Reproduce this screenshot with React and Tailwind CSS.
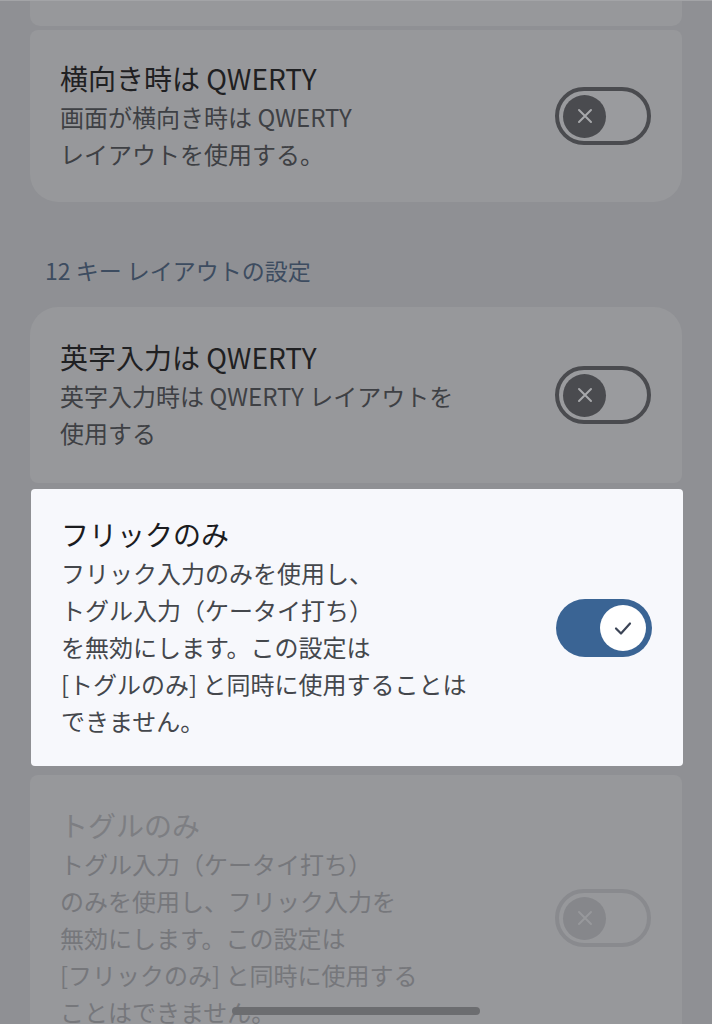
import React from "react";

const font = { fontFamily: '"Noto Sans CJK JP", "Noto Sans", sans-serif' };

function ToggleOff({ faded }) {
  return (
    <div
      className={`w-[96px] h-[58px] rounded-full border-[4px] flex items-center pl-[4px] shrink-0 ${
        faded ? "border-[#898a8e] bg-[#97989b]" : "border-[#4a4b4f] bg-[#9a9b9e]"
      }`}
    >
      <div
        className={`w-[43px] h-[43px] rounded-full flex items-center justify-center ${
          faded ? "bg-[#86878b]" : "bg-[#4a4b4f]"
        }`}
      >
        <svg width="20" height="20" viewBox="0 0 20 20">
          <path
            d="M4 4 L16 16 M16 4 L4 16"
            stroke={faded ? "#97989b" : "#a7a8ab"}
            strokeWidth="2"
            strokeLinecap="round"
          />
        </svg>
      </div>
    </div>
  );
}

function ToggleOn() {
  return (
    <div className="w-[96px] h-[58px] rounded-full bg-[#3a6494] flex items-center justify-end pr-[6px] shrink-0">
      <div className="w-[46px] h-[46px] rounded-full bg-white flex items-center justify-center">
        <svg width="22" height="22" viewBox="0 0 22 22">
          <path
            d="M4 11.5 L9 16.5 L18 6.5"
            stroke="#3b4456"
            strokeWidth="2.2"
            fill="none"
            strokeLinecap="round"
            strokeLinejoin="round"
          />
        </svg>
      </div>
    </div>
  );
}

function Row({ title, lines, toggle, titleColor, subColor, className }) {
  return (
    <div className={`flex items-center justify-between pl-[30px] pr-[31px] ${className}`}>
      <div className="flex flex-col whitespace-nowrap">
        <div className={`text-[28px] leading-[36px] ${titleColor}`}>{title}</div>
        <div className={`text-[24px] leading-[37px] mt-[2px] ${subColor}`}>
          {lines.map((l, i) => (
            <div key={i}>{l}</div>
          ))}
        </div>
      </div>
      {toggle}
    </div>
  );
}

export default function App() {
  return (
    <div
      className="relative w-[712px] h-[1024px] overflow-hidden bg-[#8f9094] border-t border-[#a3a4a7]"
      style={font}
    >
      <div className="flex flex-col px-[30px]">
        <div className="h-[26px] bg-[#97989b] rounded-b-[10px] -mt-px" />
        <Row
          className="mt-[4px] h-[172px] bg-[#97989b] rounded-t-[8px] rounded-b-[28px]"
          title="横向き時は QWERTY"
          lines={["画面が横向き時は QWERTY", "レイアウトを使用する。"]}
          titleColor="text-[#1f2022]"
          subColor="text-[#3e4044]"
          toggle={<ToggleOff />}
        />
        <div className="mt-[54px] ml-[15px] text-[23px] leading-[28px] text-[#3d4c60]">
          12 キー レイアウトの設定
        </div>
        <Row
          className="mt-[23px] h-[176px] bg-[#97989b] rounded-t-[28px] rounded-b-[8px]"
          title="英字入力は QWERTY"
          lines={["英字入力時は QWERTY レイアウトを", "使用する"]}
          titleColor="text-[#1f2022]"
          subColor="text-[#3e4044]"
          toggle={<ToggleOff />}
        />
        <Row
          className="mt-[6px] h-[277px] bg-[#f7f8fc] rounded-[4px] mx-[1px] -mr-px"
          title="フリックのみ"
          lines={[
            "フリック入力のみを使用し、",
            "トグル入力（ケータイ打ち）",
            "を無効にします。この設定は",
            "[トグルのみ] と同時に使用することは",
            "できません。",
          ]}
          titleColor="text-[#1b1c1f]"
          subColor="text-[#44474c]"
          toggle={<ToggleOn />}
        />
        <Row
          className="mt-[9px] h-[280px] bg-[#97989b] rounded-t-[8px] items-start pt-[32px]"
          title="トグルのみ"
          lines={[
            "トグル入力（ケータイ打ち）",
            "のみを使用し、フリック入力を",
            "無効にします。この設定は",
            "[フリックのみ] と同時に使用する",
            "ことはできません。",
          ]}
          titleColor="text-[#7d7e82]"
          subColor="text-[#76777b]"
          toggle={
            <div className="mt-[82px]">
              <ToggleOff faded />
            </div>
          }
        />
      </div>
      <div className="absolute left-[232px] top-[1006px] w-[248px] h-[8px] rounded-full bg-[#6c6d70]" />
    </div>
  );
}
